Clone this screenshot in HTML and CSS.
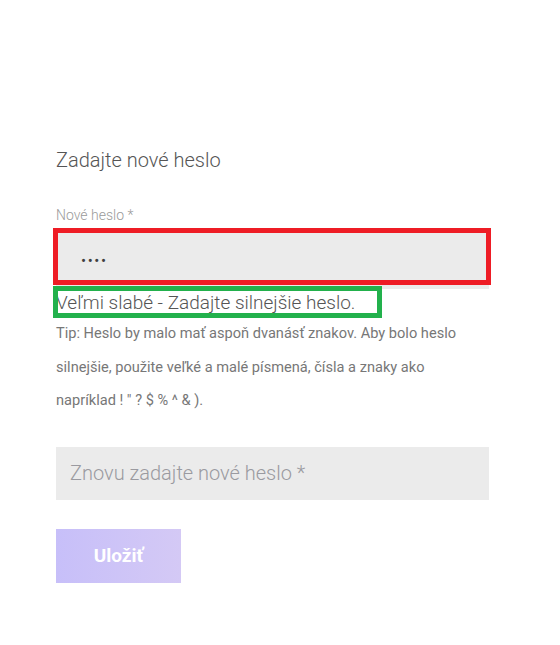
FILE: index.html
```html
<!DOCTYPE html>
<html lang="sk">
<head>
<meta charset="utf-8">
<title>Zadajte nové heslo</title>
<link rel="stylesheet" href="styles.css">
</head>
<body>
<main class="form">
  <h2 class="title">Zadajte nové heslo</h2>
  <label class="label" for="pw1">Nové heslo *</label>
  <div class="field-wrap">
    <input id="pw1" class="field field-pw" type="password" value="abcd">
    <span class="mark mark-red"></span>
  </div>
  <div class="strength-wrap">
    <p class="strength">Veľmi slabé - Zadajte silnejšie heslo.</p>
    <span class="mark mark-green"></span>
  </div>
  <p class="hint">Tip: Heslo by malo mať aspoň dvanásť znakov. Aby bolo heslo silnejšie, použite veľké a malé písmená, čísla a znaky ako napríklad ! " ? $ % ^ &amp; ).</p>
  <input class="field field-repeat" type="password" placeholder="Znovu zadajte nové heslo *">
  <button class="btn" type="button">Uložiť</button>
</main>
</body>
</html>
```

FILE: styles.css
```css
* { box-sizing: border-box; }
html, body { margin: 0; padding: 0; background: #fff; }
body { font-family: Roboto, "Open Sans", "Liberation Sans", sans-serif; }

.form {
  width: 433px;
  margin-left: 56px;
  padding-top: 148px;
  display: flex;
  flex-direction: column;
  align-items: flex-start;
}

.title {
  margin: 0;
  font-size: 20px;
  line-height: 24px;
  font-weight: 300;
  color: #555;
}

.label {
  margin-top: 33px;
  font-size: 14px;
  line-height: 20px;
  font-weight: 300;
  color: #9a9a9a;
}

.field-wrap {
  position: relative;
  width: 100%;
  margin-top: 8px;
}

.field {
  display: block;
  width: 100%;
  border: 0;
  outline: 0;
  background: #ebebeb;
  font-family: inherit;
  color: #3f3f3f;
}

.field-pw {
  height: 56px;
  padding: 0 0 0 25px;
  font-size: 15px;
  letter-spacing: 1.6px;
}

.field-repeat {
  height: 53px;
  margin-top: 29px;
  padding: 0 0 0 14px;
  font-size: 20px;
  font-weight: 300;
}
.field-repeat::placeholder { color: #9a9aa0; opacity: 1; }

.mark {
  position: absolute;
  pointer-events: none;
}
.mark-red {
  left: -3px;
  top: -5px;
  width: 438px;
  height: 57px;
  border: 5px solid #ee1c25;
}

.strength-wrap {
  position: relative;
  width: 100%;
}
.strength {
  margin: 0;
  font-size: 19px;
  line-height: 28px;
  font-weight: 300;
  color: #555;
}
.mark-green {
  left: -3px;
  top: -3px;
  width: 329px;
  height: 32px;
  border: 5px solid #22b14c;
}

.hint {
  margin: 0;
  max-width: 418px;
  font-size: 14.6px;
  line-height: 33.5px;
  font-weight: 400;
  color: #777;
}

.btn {
  margin-top: 29px;
  width: 125px;
  height: 54px;
  border: 0;
  background: linear-gradient(90deg, #c7bff9, #d4c9f5);
  color: #fff;
  font-family: inherit;
  font-size: 19px;
  font-weight: 700;
  cursor: pointer;
}
```
